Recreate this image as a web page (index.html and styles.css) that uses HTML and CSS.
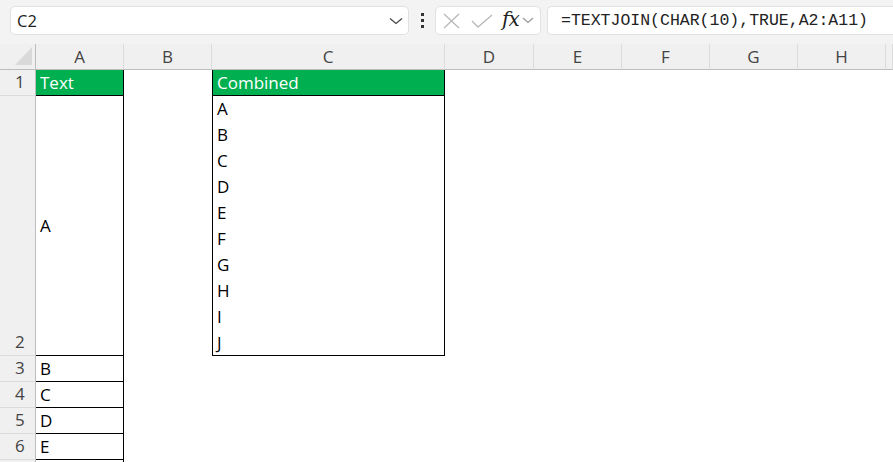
FILE: index.html
```html
<!DOCTYPE html>
<html lang="en">

<head>
    <meta charset="UTF-8" />
    <title>TEXTJOIN</title>
    <link rel="stylesheet" href="styles.css">
</head>

<body>
    <div class="topbar">
        <div class="namebox">
            <span>C2</span>
            <svg class="chevron" width="14" height="8" viewBox="0 0 14 8"><path d="M1 1.5 L7 6.5 L13 1.5" /></svg>
        </div>
        <div class="grip"><i></i><i></i><i></i></div>
        <div class="fxbox">
            <svg width="18" height="16" viewBox="0 0 18 16" class="cancel"><path d="M1 1 L16 15 M16 1 L1 15" /></svg>
            <svg width="22" height="14" viewBox="0 0 22 14" class="enter"><path d="M1 7 L7 13 L21 1" /></svg>
            <span class="fx">fx</span>
            <svg class="chevron small" width="12" height="7" viewBox="0 0 12 7"><path d="M1 1 L6 5.5 L11 1" /></svg>
        </div>
        <div class="formula">=TEXTJOIN(CHAR(10),TRUE,A2:A11)</div>
    </div>

    <div class="sheet">
        <!-- column headers -->
        <div class="corner"><span class="tri"></span></div>
        <div class="colhead">A</div>
        <div class="colhead">B</div>
        <div class="colhead">C</div>
        <div class="colhead">D</div>
        <div class="colhead">E</div>
        <div class="colhead">F</div>
        <div class="colhead">G</div>
        <div class="colhead">H</div>
        <div class="colhead"></div>

        <!-- row 1 -->
        <div class="rowhead">1</div>
        <div class="cell boxed head">Text</div>
        <div class="cell"></div>
        <div class="cell boxed left head">Combined</div>
        <div class="cell fill"></div>

        <!-- row 2 -->
        <div class="rowhead">2</div>
        <div class="cell boxed">A</div>
        <div class="cell"></div>
        <div class="cell boxed left wrap">A<br>B<br>C<br>D<br>E<br>F<br>G<br>H<br>I<br>J</div>
        <div class="cell fill"></div>

        <div class="rowhead">3</div>
        <div class="cell boxed">B</div>
        <div class="cell rest"></div>

        <div class="rowhead">4</div>
        <div class="cell boxed">C</div>
        <div class="cell rest"></div>

        <div class="rowhead">5</div>
        <div class="cell boxed">D</div>
        <div class="cell rest"></div>

        <div class="rowhead">6</div>
        <div class="cell boxed">E</div>
        <div class="cell rest"></div>

        <!-- row 7 only peeks in at the bottom edge -->
        <div class="rowhead"></div>
        <div class="cell boxed"></div>
        <div class="cell rest"></div>
    </div>
</body>

</html>
```

FILE: styles.css
```css
body {
    margin: 0;
    overflow: hidden;
    background: #ffffff;
    font-family: "Open Sans", "Noto Sans", sans-serif;
}

.topbar {
    height: 44px;
    background: #f3f3f3;
    display: flex;
    align-items: flex-start;
    padding: 6px 0 0 10px;
    box-sizing: border-box;
    white-space: nowrap;
}

.namebox,
.fxbox,
.formula {
    height: 29px;
    background: #ffffff;
    border: 1px solid #e1e1e1;
    border-radius: 5px;
    box-sizing: border-box;
    display: flex;
    align-items: center;
}

.namebox {
    width: 399px;
    padding: 0 5px 0 6px;
    justify-content: space-between;
    font-size: 16.5px;
    color: #222;
}

.chevron path,
.cancel path,
.enter path {
    fill: none;
    stroke-width: 1.3;
}

.chevron path {
    stroke: #444;
}

.chevron.small path {
    stroke: #999;
}

.grip {
    width: 26px;
    height: 29px;
    display: flex;
    flex-direction: column;
    align-items: center;
    justify-content: center;
    gap: 3px;
}

.grip i {
    width: 3px;
    height: 3px;
    background: #333;
}

.fxbox {
    width: 106px;
    padding: 0 3px 0 7px;
}

.cancel path,
.enter path {
    stroke: #b8b8b8;
}

.cancel {
    margin-right: 10px;
}

.enter {
    margin-right: 9px;
}

.fx {
    font-family: "DejaVu Serif", serif;
    font-style: italic;
    font-size: 20px;
    color: #222;
    margin-right: 3px;
    margin-top: -3px;
    letter-spacing: -1px;
}

.formula {
    margin-left: 6px;
    flex: 1;
    padding-left: 13px;
    border-right: none;
    border-radius: 5px 0 0 5px;
    font-family: "Liberation Mono", monospace;
    font-size: 16.5px;
    color: #222;
}

.sheet {
    display: grid;
    grid-template-columns: 36px 88px 88px 233px 89px 88px 88px 88px 88px 1fr;
    grid-template-rows: 26px 26px 260px 26px 26px 26px 26px 26px;
}

.corner,
.colhead,
.rowhead {
    background: #f0f0f0;
    color: #444;
    font-size: 17px;
    box-sizing: border-box;
}

.corner {
    border-right: 1px solid #bdbdbd;
    border-bottom: 1px solid #bdbdbd;
    position: relative;
}

.tri {
    position: absolute;
    right: 3px;
    bottom: 4px;
    width: 0;
    height: 0;
    border-left: 17px solid transparent;
    border-bottom: 18px solid #d9d9d9;
}

.colhead {
    border-right: 1px solid #dcdcdc;
    border-bottom: 1px solid #bdbdbd;
    display: flex;
    align-items: center;
    justify-content: center;
}

.rowhead {
    border-right: 1px solid #bdbdbd;
    border-bottom: 1px solid #dcdcdc;
    display: flex;
    align-items: flex-end;
    padding: 0 0 1px 15px;
    line-height: 24px;
}

.cell {
    box-sizing: border-box;
    font-size: 17px;
    color: #000;
    display: flex;
    align-items: center;
    padding-left: 4px;
}

.boxed {
    border-right: 1px solid #000;
    border-bottom: 1px solid #000;
}

.left {
    border-left: 1px solid #000;
}

.head {
    background: #00b050;
    color: #ffffff;
}

.wrap {
    display: block;
    line-height: 26px;
}

.fill {
    grid-column: 5 / -1;
}

.rest {
    grid-column: 3 / -1;
}
```
